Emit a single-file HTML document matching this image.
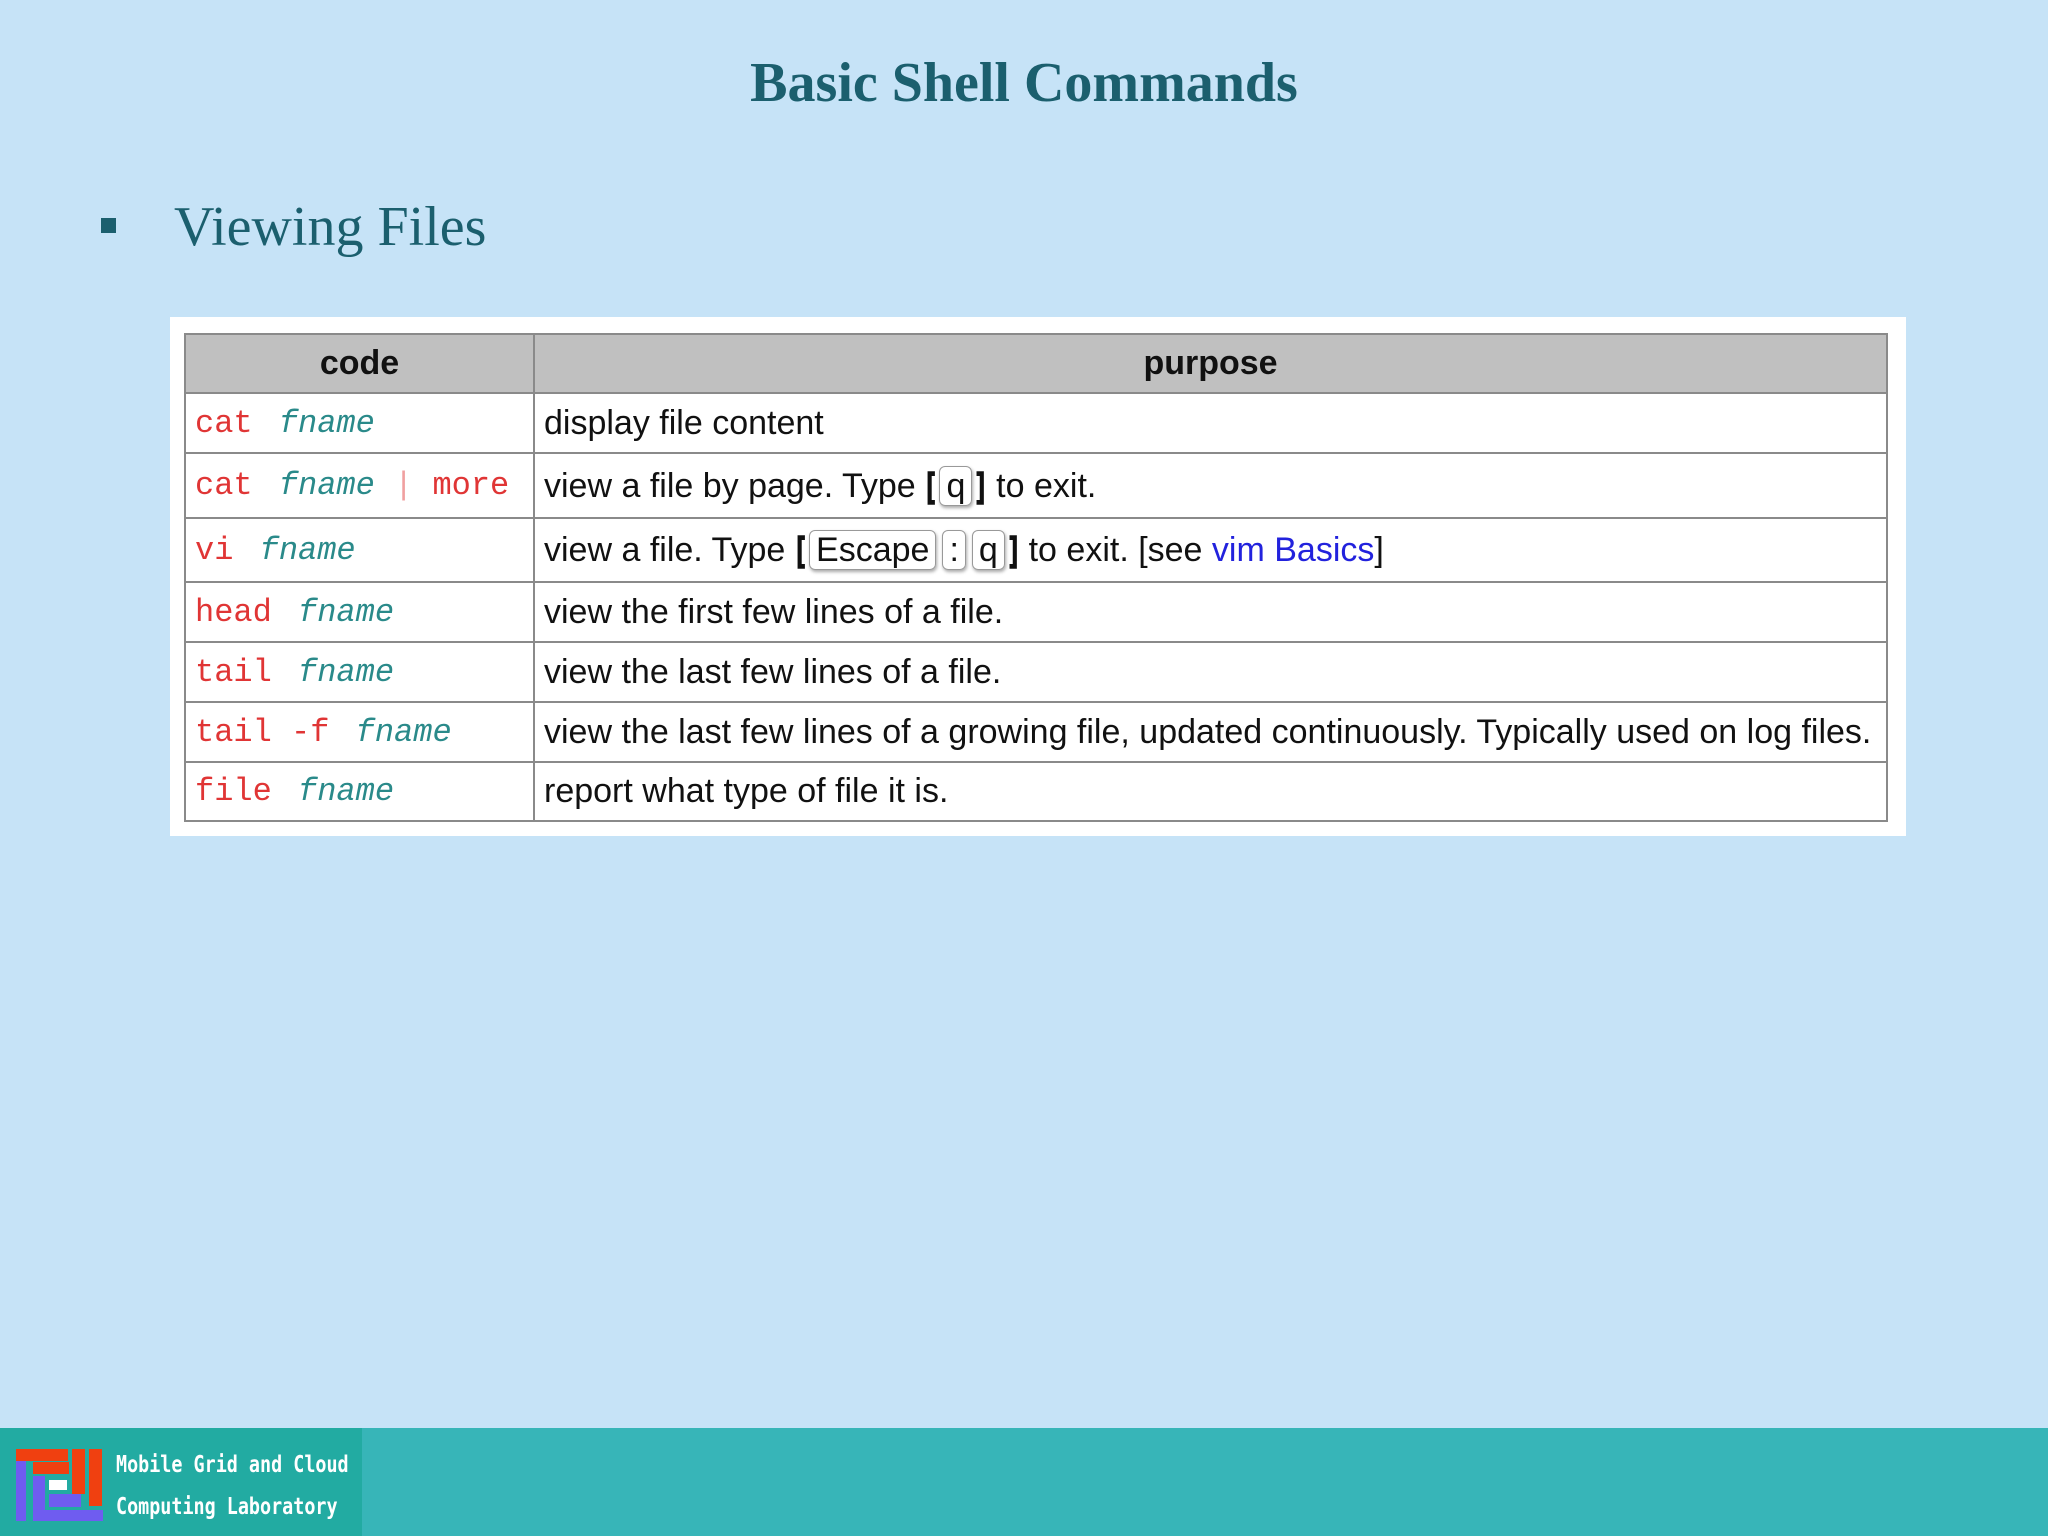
<!DOCTYPE html>
<html><head><meta charset="utf-8"><style>
html,body{margin:0;padding:0}
body{width:2048px;height:1536px;background:#c6e3f7;position:relative;overflow:hidden;font-family:"Liberation Sans",Arial,sans-serif}
.title{position:absolute;left:0;width:2048px;top:51px;text-align:center;font-family:"Liberation Serif",serif;font-weight:bold;font-size:56px;color:#1b5f6e}
.bullet{position:absolute;left:101px;top:218px;width:15px;height:15px;background:#1b5f6e}
.sub{position:absolute;left:174px;top:195px;font-family:"Liberation Serif",serif;font-size:56px;color:#1b5f6e}
.box{position:absolute;left:170px;top:317px;width:1736px;height:519px;background:#fff}
table{position:absolute;left:184px;top:333px;width:1704px;border-collapse:collapse}
td,th{border:2px solid #8a8a8a;padding:0 0 0 9px;white-space:nowrap;font-size:34px;color:#111;text-align:left}
th{background:#c0c0c0;text-align:center;font-weight:bold;height:57px;padding:0}
td.c{width:338px;font-family:"Liberation Mono",monospace;font-size:32px;color:#e03535}
td.c i{color:#2a8a8a;margin-left:7px}
.t{display:inline-block;transform-origin:left center}
a{color:#2222dd;text-decoration:none}
.k{display:inline-block;border:1px solid #999;border-radius:6px;padding:0 6px;box-shadow:1px 2px 3px #aaa;line-height:38px;margin:0 3px}
.br{font-weight:900;display:inline-block;transform:scaleX(0.7);-webkit-text-stroke:1.5px #111}
.foot{position:absolute;left:0;top:1428px;width:2048px;height:108px;background:#37b5b8}
.logo{position:absolute;left:0;top:1428px;width:362px;height:108px;background:#22aba2}
.lt{position:absolute;left:116px;color:#fff;font-family:"DejaVu Sans Mono",monospace;font-weight:bold;font-size:23px;transform:scaleX(0.8);transform-origin:left}
</style></head><body>
<div class="title">Basic Shell Commands</div>
<div class="bullet"></div>
<div class="sub">Viewing Files</div>
<div class="box"></div>
<table>
<tr><th style="width:347px">code</th><th>purpose</th></tr>
<tr style="height:60px"><td class="c">cat <i>fname</i></td><td><span class="t">display file content</span></td></tr>
<tr style="height:65px"><td class="c">cat <i>fname</i> <span style="color:#f0a0a0">|</span> more</td><td><span class="t">view a file by page. Type <span class="br">[</span><span class="k">q</span><span class="br">]</span> to exit.</span></td></tr>
<tr style="height:64px"><td class="c">vi <i>fname</i></td><td><span class="t">view a file. Type <span class="br">[</span><span class="k">Escape</span><span class="k">:</span><span class="k">q</span><span class="br">]</span> to exit. [see <a>vim Basics</a>]</span></td></tr>
<tr style="height:60px"><td class="c">head <i>fname</i></td><td><span class="t">view the first few lines of a file.</span></td></tr>
<tr style="height:60px"><td class="c">tail <i>fname</i></td><td><span class="t">view the last few lines of a file.</span></td></tr>
<tr style="height:60px"><td class="c">tail -f <i>fname</i></td><td><span class="t">view the last few lines of a growing file, updated continuously. Typically used on log files.</span></td></tr>
<tr style="height:59px"><td class="c">file <i>fname</i></td><td><span class="t">report what type of file it is.</span></td></tr>
</table>
<div class="foot"></div>
<div class="logo"></div>
<svg style="position:absolute;left:16px;top:1446px" width="88" height="78">
<rect x="0" y="3" width="10" height="72" fill="#6f5cf0"/>
<rect x="0" y="3" width="52" height="12" fill="#f04010"/>
<rect x="17" y="16" width="36" height="12" fill="#f04010"/>
<rect x="56" y="3" width="13" height="45" fill="#f04010"/>
<rect x="73" y="3" width="13" height="57" fill="#f04010"/>
<rect x="17" y="30" width="12" height="35" fill="#6f5cf0"/>
<rect x="33" y="34" width="18" height="10" fill="#fff"/>
<rect x="33" y="48" width="32" height="13" fill="#6f5cf0"/>
<rect x="17" y="64" width="70" height="11" fill="#6f5cf0"/>
</svg>
<div class="lt" style="top:1452px">Mobile Grid and Cloud</div>
<div class="lt" style="top:1494px">Computing Laboratory</div>
</body></html>
